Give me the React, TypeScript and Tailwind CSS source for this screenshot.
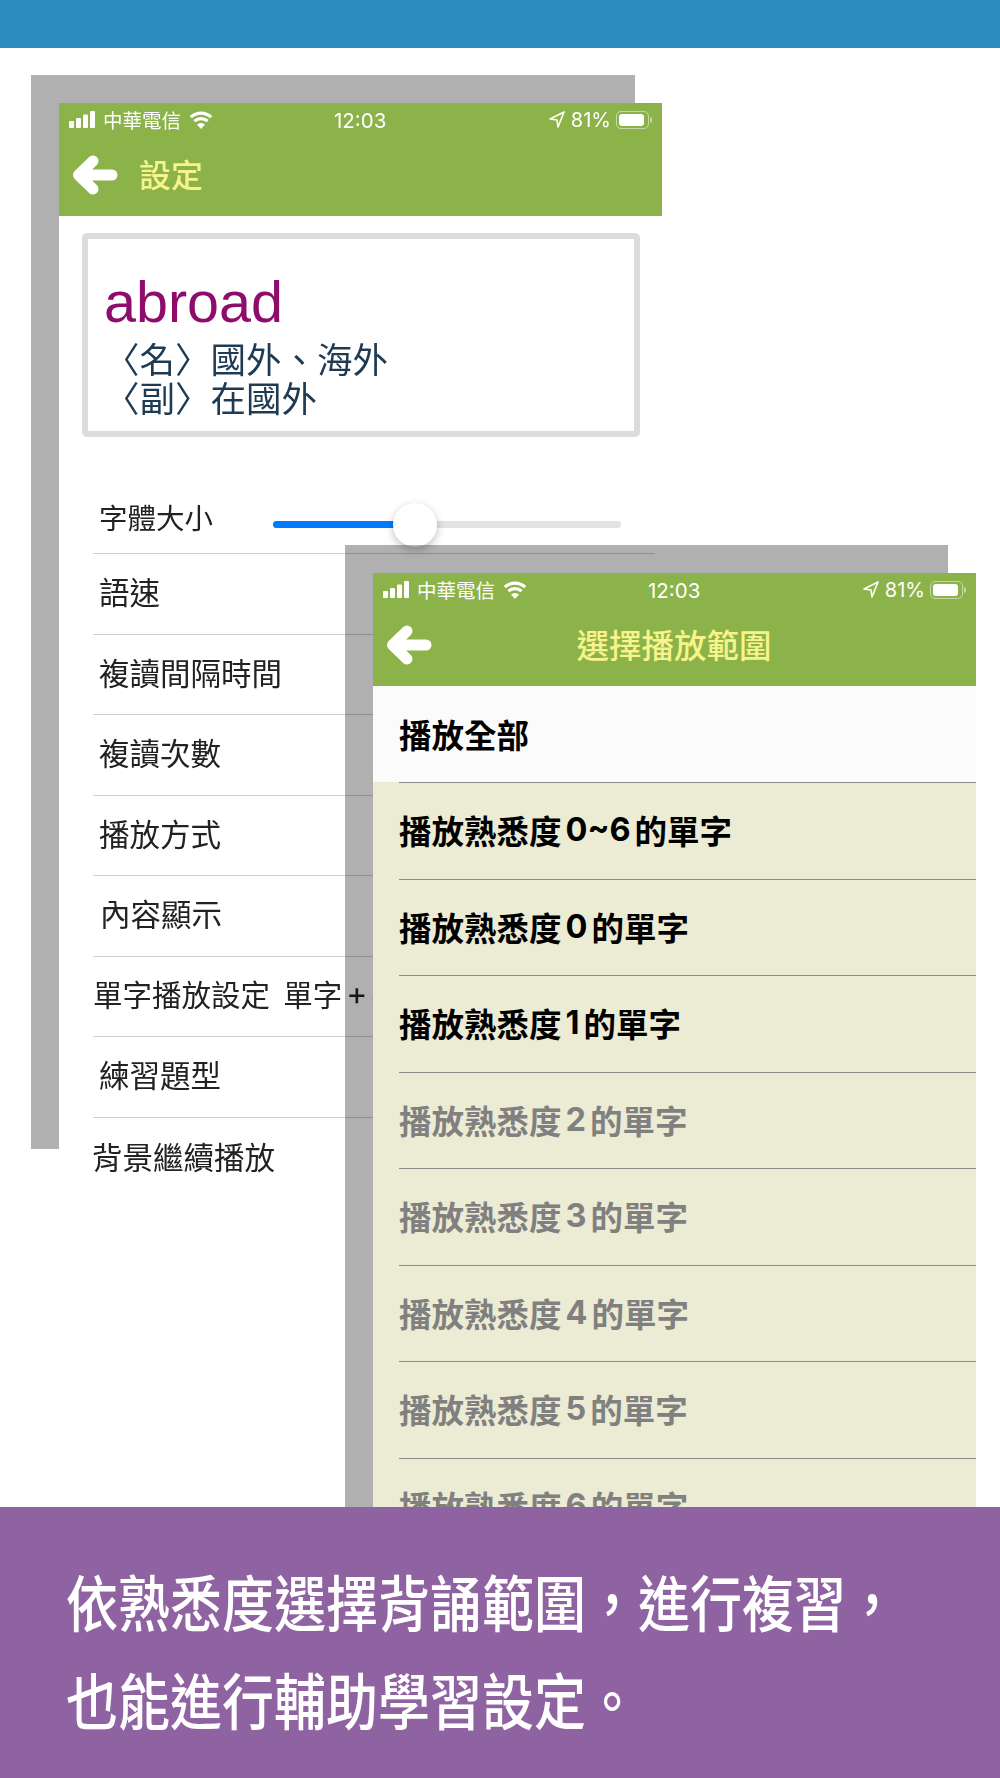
import type { ReactNode } from "react";

const cjk = "font-['Noto_Sans_CJK_TC','Noto_Sans',sans-serif]";

const settings = [
  { label: "語速", cls: "pl-[6px]" },
  { label: "複讀間隔時間", cls: "pl-[6px]" },
  { label: "複讀次數", cls: "pl-[6px]" },
  { label: "播放方式", cls: "pl-[6px]" },
  { label: "內容顯示", cls: "pl-[7px]" },
  { label: "單字播放設定\u00a0\u00a0單字", cls: "pl-0 text-[29.5px]", extra: "英文" },
  { label: "練習題型", cls: "pl-[6px]" },
];

const ranges = [
  { pre: "播放熟悉度", num: "0~6", on: true },
  { pre: "播放熟悉度", num: "0", on: true },
  { pre: "播放熟悉度", num: "1", on: true },
  { pre: "播放熟悉度", num: "2", on: false },
  { pre: "播放熟悉度", num: "3", on: false },
  { pre: "播放熟悉度", num: "4", on: false },
  { pre: "播放熟悉度", num: "5", on: false },
  { pre: "播放熟悉度", num: "6", on: false },
];

function BackArrow() {
  return (
    <svg width="46" height="40" viewBox="0 0 46 40" className="shrink-0">
      <path
        d="M21 6 L6.5 20 L21 34 M8 20 H40"
        fill="none"
        stroke="#fff"
        strokeWidth="11"
        strokeLinecap="round"
        strokeLinejoin="round"
      />
    </svg>
  );
}

function StatusBar() {
  return (
    <div className="relative flex h-[33px] items-center px-[10px] text-[19.5px] leading-none text-white">
      <svg width="27" height="17" viewBox="0 0 27 17" className="shrink-0">
        <rect x="0" y="10" width="5" height="7" rx="1" fill="#fff" />
        <rect x="7" y="7" width="5" height="10" rx="1" fill="#fff" />
        <rect x="14" y="3.5" width="5" height="13.5" rx="1" fill="#fff" />
        <rect x="21" y="0" width="5" height="17" rx="1" fill="#fff" />
      </svg>
      <span className="ml-[7px]">中華電信</span>
      <svg width="24" height="18" viewBox="0 0 24 18" className="ml-[8px] shrink-0">
        <path d="M12 18 L8 13.6 A6 6 0 0 1 16 13.6 Z" fill="#fff" />
        <path d="M5.4 10.2 A9.6 9.6 0 0 1 18.6 10.2" fill="none" stroke="#fff" strokeWidth="3.2" />
        <path d="M1.8 6.2 A14.8 14.8 0 0 1 22.2 6.2" fill="none" stroke="#fff" strokeWidth="3.2" />
      </svg>
      <span className="absolute left-[275px] top-[8px] font-['Inter',sans-serif] text-[20.5px]">12:03</span>
      <div className="ml-auto flex items-center">
        <svg width="16" height="17" viewBox="0 0 16 17" className="shrink-0">
          <path d="M15 1 L1 8 L8 9 L9 16 Z" fill="none" stroke="#fff" strokeWidth="1.6" strokeLinejoin="round" />
        </svg>
        <span className="ml-[6px] font-['Inter',sans-serif] text-[20px]">81%</span>
        <div className="ml-[5px] flex h-[18px] w-[33px] items-center rounded-[5px] border border-white/50 p-[2px]">
          <div className="h-full w-[25px] rounded-[3px] bg-white" />
        </div>
        <div className="ml-px h-[6px] w-[2px] rounded-r bg-white/50" />
      </div>
    </div>
  );
}

function Phone({ title, centered, children }: { title: string; centered?: boolean; children: ReactNode }) {
  return (
    <div className="flex h-full flex-col bg-white">
      <div className="h-[113px] shrink-0 bg-[#8cb34a]">
        <StatusBar />
        <div className="relative flex h-[80px] items-center pb-[3px] pl-[13px]">
          <BackArrow />
          <span
            className={
              centered
                ? "flex-1 pr-[60px] text-center text-[32.5px] font-medium text-[#f8f48c]"
                : "-mt-[3px] ml-[21px] text-[32px] font-medium text-[#f8f48c]"
            }
          >
            {title}
          </span>
        </div>
      </div>
      {children}
    </div>
  );
}

export default function App() {
  return (
    <div className={`flex h-[1778px] w-[1000px] flex-col overflow-hidden bg-white ${cjk}`}>
      <header className="h-[48px] shrink-0 bg-[#2b8bbf]" />

      <section className="relative min-h-0 flex-1 overflow-hidden">
        {/* settings window */}
        <div className="absolute left-[31px] top-[27px] h-[1074px] w-[604px] bg-[#b0b0b0]" />
        <div className="absolute left-[59px] top-[55px] h-[1150px] w-[603px]">
          <Phone title="設定">
            <div className="mx-[23px] mt-[17px] h-[204px] w-[558px] rounded-[5px] border-[6px] border-[#dcdcdc] bg-white pl-[16px] pt-[28px]">
              <div className="font-['Liberation_Sans',sans-serif] text-[57.5px] leading-[71px] text-[#8e0c6b]">abroad</div>
              <div className="text-[35.5px] leading-[39px] text-[#1f3b53]">
                <div>〈名〉國外、海外</div>
                <div>〈副〉在國外</div>
              </div>
            </div>

            <div className="ml-[34px] mt-[36px] w-[562px] text-[30.5px] leading-none text-[#222]">
              <div className="flex h-[81px] items-center border-b border-[#cfcfcf] pl-[6px] pt-[8px]">
                <span className="text-[28.5px]">字體大小</span>
                <div className="relative ml-[60px] flex h-[7px] w-[348px] translate-y-[7px] rounded-full bg-[#e2e2e2]">
                  <div className="h-full w-[141px] rounded-l-full bg-[#007aff]" />
                  <div className="absolute left-[120px] top-[-18px] h-[44px] w-[44px] rounded-full bg-white shadow-[0_3px_8px_rgba(0,0,0,0.25)]" />
                </div>
              </div>
              {settings.map((s) => (
                <div key={s.label} className={`flex h-[80.5px] items-center whitespace-nowrap border-b border-[#cfcfcf] pb-[5px] ${s.cls}`}>
                  {s.label}
                  {s.extra && (
                    <>
                      <span className="mx-[4px] font-['Inter',sans-serif] text-[32px]">+</span>
                      {s.extra}
                    </>
                  )}
                </div>
              ))}
              <div className="-ml-px flex h-[80px] items-center pb-[3px]">背景繼續播放</div>
            </div>
          </Phone>
        </div>

        {/* range window, its gray backing multiplies over the page below */}
        <div className="absolute bottom-0 left-[345px] top-[497px] w-[603px] bg-[#b0b0b0] mix-blend-multiply" />
        <div className="absolute bottom-0 left-[373px] top-[525px] w-[603px]">
          <Phone title="選擇播放範圍" centered>
            <div className="flex h-[96px] shrink-0 items-center bg-[#fbfbfb] pl-[26px] text-[32.5px] font-bold text-black">
              播放全部
            </div>
            <div className="flex-1 bg-[#ecebd3] pl-[26px] text-[32.5px] font-bold">
              {ranges.map((r) => (
                <div
                  key={r.num}
                  className={`flex h-[96.5px] items-center border-t border-[#8d8d85] ${r.on ? "text-black" : "text-[#808080]"}`}
                >
                  {r.pre}
                  <span className="px-[4px] font-['Inter',sans-serif] font-bold">{r.num}</span>
                  的單字
                </div>
              ))}
            </div>
          </Phone>
        </div>
      </section>

      <footer className="relative z-10 h-[271px] shrink-0 bg-[#8f63a2] pl-[66px] pt-[36px] text-[52px] font-medium leading-[98px] text-white">
        <div className="origin-top scale-y-[1.18]">依熟悉度選擇背誦範圍，進行複習，</div>
        <div className="origin-top scale-y-[1.18]">也能進行輔助學習設定。</div>
      </footer>
    </div>
  );
}
